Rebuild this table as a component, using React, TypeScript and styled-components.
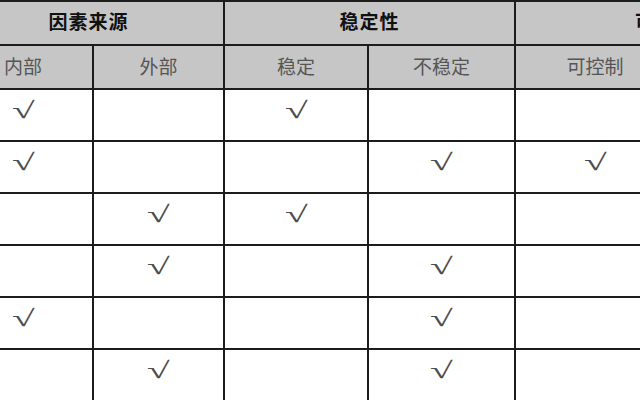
import styled, { createGlobalStyle } from "styled-components";

const GlobalStyle = createGlobalStyle`
  html, body {
    margin: 0;
    padding: 0;
    background: #ffffff;
    overflow: hidden;
  }
`;

const Page = styled.div`
  width: 640px;
  height: 400px;
  overflow: hidden;
`;

const Table = styled.table`
  border-collapse: collapse;
  table-layout: fixed;
  width: 862px;
  margin-left: -48px;
  font-family: "Noto Sans CJK SC", "Noto Sans", sans-serif;
`;

const HeadRow = styled.tr`
  height: 44px;
  background: #c6c6c6;
`;

const GroupCell = styled.th`
  border: 2px solid #1c1c1c;
  padding: 0 0 6px;
  font-size: 19px;
  font-weight: 700;
  color: #111111;
  text-align: center;
  letter-spacing: 1px;
  white-space: nowrap;
`;

const SubCell = styled.th`
  border: 2px solid #1c1c1c;
  padding: 0 0 4px;
  font-size: 19px;
  font-weight: 400;
  color: #555555;
  text-align: center;
  white-space: nowrap;
`;

const BodyRow = styled.tr`
  height: 52px;
`;

const Cell = styled.td`
  border: 2px solid #1c1c1c;
  padding: 9px 0 0;
  vertical-align: top;
  text-align: center;
  line-height: 24px;
`;

const Tick = styled.span`
  display: inline-block;
  font-family: "Liberation Serif", "DejaVu Serif", serif;
  font-size: 23px;
  color: #4d4d4d;
  transform: scaleX(1.8);
`;

const columns = ["内部", "外部", "稳定", "不稳定", "可控制", "不可控制"];
const widths = [140, 131, 144, 147, 160, 140];

// which columns carry a tick in each row (last column lies outside the view)
const rows: number[][] = [
  [0, 2],
  [0, 3, 4],
  [1, 2],
  [1, 3],
  [0, 3],
  [1, 3],
];

export default function App() {
  return (
    <Page>
      <GlobalStyle />
      <Table>
        <colgroup>
          {widths.map((w, i) => (
            <col key={i} style={{ width: w }} />
          ))}
        </colgroup>
        <thead>
          <HeadRow>
            <GroupCell colSpan={2}>因素来源</GroupCell>
            <GroupCell colSpan={2}>稳定性</GroupCell>
            <GroupCell colSpan={2}>可控性</GroupCell>
          </HeadRow>
          <HeadRow>
            {columns.map((c) => (
              <SubCell key={c}>{c}</SubCell>
            ))}
          </HeadRow>
        </thead>
        <tbody>
          {rows.map((marks, r) => (
            <BodyRow key={r}>
              {columns.map((c, i) => (
                <Cell key={c}>{marks.includes(i) ? <Tick>√</Tick> : null}</Cell>
              ))}
            </BodyRow>
          ))}
        </tbody>
      </Table>
    </Page>
  );
}
